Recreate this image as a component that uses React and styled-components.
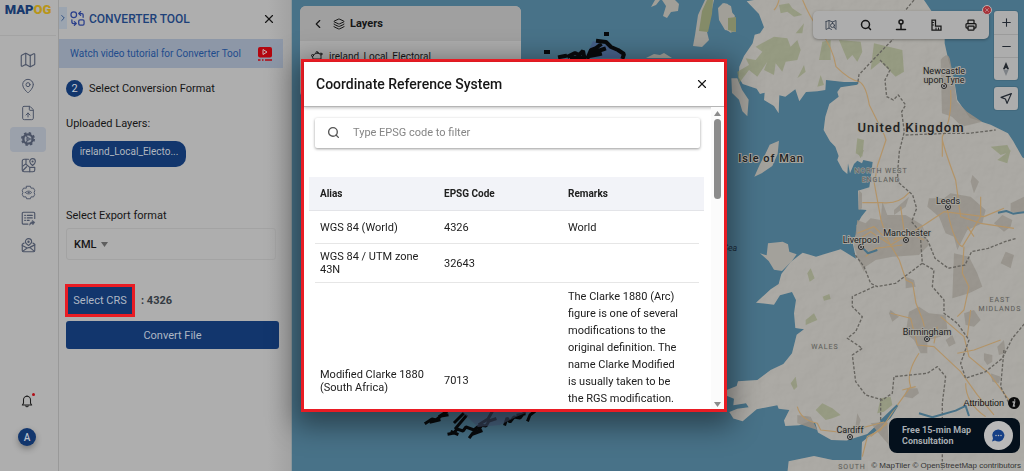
import React from 'react'
import styled, { createGlobalStyle, css } from 'styled-components'
import { ChevronLeft, ChevronRight, FileUp, Layers, Map, MapPin, Minus, Plus, Printer, Search, X } from 'lucide-react'

const GlobalStyle = createGlobalStyle`
  * {
    box-sizing: border-box;
  }
  body {
    margin: 0;
    font-family: Roboto, "Liberation Sans", sans-serif;
    font-size: 11px;
    color: #161616;
    background: #aeaeae;
  }
  button, input, select {
    font: inherit;
    color: inherit;
  }
  button {
    display: flex;
    align-items: center;
    justify-content: center;
    padding: 0;
    border: none;
    background: none;
    cursor: pointer;
  }
  svg {
    display: block;
    flex-shrink: 0;
  }
`

const Page = styled.div`
  display: flex;
  height: 100vh;
  overflow: hidden;
`

/* side rail */

const Rail = styled.nav`
  width: 59px;
  flex-shrink: 0;
  display: flex;
  flex-direction: column;
  align-items: center;
  border-right: 1px solid #999;
  padding: 0 2px 25px 0;
`

const Logo = styled.a`
  width: 100%;
  height: 36px;
  flex-shrink: 0;
  text-align: center;
  border-bottom: 1px solid #a3a3a3;
  font-size: 13px;
  font-weight: 900;
  line-height: 20px;
  color: #17396d;
  text-decoration: none;

  span {
    color: #b8951a;
  }
`

const RailList = styled.div`
  height: 211px;
  flex-shrink: 0;
  margin-top: 11px;
  display: flex;
  flex-direction: column;
  justify-content: space-between;
`

const RailButton = styled.button`
  width: 36px;
  height: 25px;
  border-radius: 4px;
  color: #4b5366;
  background: ${({ $active }) => ($active ? '#9ba1ab' : 'none')};
`

const Bell = styled.button`
  position: relative;
  margin: auto 2px 0 0;
  color: #1d1d1d;

  &::after {
    content: '';
    position: absolute;
    top: -1px;
    right: -1px;
    width: 3px;
    height: 3px;
    border-radius: 50%;
    background: #b00d16;
  }
`

const Avatar = styled.button`
  width: 18px;
  height: 18px;
  margin: 20px 2px 0 0;
  border-radius: 50%;
  background: #12366d;
  color: #b8bfca;
  font-size: 10px;
  font-weight: 500;
  box-shadow: 0 3px 6px rgba(0, 0, 0, 0.3);
`

/* converter panel */

const Panel = styled.section`
  position: relative;
  width: 232px;
  flex-shrink: 0;
  background: linear-gradient(to right, #aeaeae 90%, #a2a2a2);
`

const PanelHead = styled.header`
  display: flex;
  align-items: center;
  height: 39px;
  padding: 0 15px 2px 0;

  h1 {
    flex: 1;
    margin: 0 0 0 4px;
    font-size: 12px;
    font-weight: 500;
    color: #1d4179;
  }
`

const Collapse = styled.button`
  width: 8px;
  height: 22px;
  margin: 0 3px 2px 0;
  background: #9ca5b0;
  color: #1d4179;
`

const Tutorial = styled.a`
  display: flex;
  align-items: center;
  justify-content: space-between;
  height: 29px;
  margin-right: 8px;
  padding: 0 11px;
  background: #8d97a7;
  color: #1f4c8c;
  font-size: 10px;
  text-decoration: none;
`

const PanelBody = styled.div`
  display: flex;
  flex-direction: column;
  padding: 12px 12px 0 7px;
`

const Step = styled.h2`
  display: flex;
  align-items: center;
  gap: 6px;
  margin: 0;
  font-size: 11px;
  font-weight: 400;

  span {
    width: 17px;
    height: 17px;
    border-radius: 50%;
    background: #12366d;
    color: #c3c8d0;
    line-height: 17px;
    text-align: center;
  }
`

const FieldLabel = styled.label`
  line-height: 16px;
  margin-top: ${({ $gap }) => $gap}px;
`

const Chip = styled.button`
  align-self: flex-start;
  width: 114px;
  height: 26px;
  margin: 9px 0 0 6px;
  padding-bottom: 5px;
  border-radius: 10px;
  background: #12366d;
  color: #b0b6bf;
  font-size: 10px;
`

const SelectBox = styled.div`
  display: flex;
  align-items: center;
  gap: 4px;
  height: 32px;
  margin: 4px 3px 0 0;
  padding-left: 7px;
  border: 1px solid #a3a3a3;
  border-radius: 3px;

  select {
    appearance: none;
    border: none;
    background: none;
    padding: 0;
    outline: none;
    font-weight: 500;
  }
`

const CrsRow = styled.div`
  display: flex;
  align-items: center;
  gap: 6px;
  margin: 24px 0 4px -1px;
  font-weight: 700;
  color: #333a42;
`

const ActionButton = styled.button`
  height: 28px;
  border-radius: 3px;
  background: #12366d;
  color: #aeb7c4;
  font-weight: 400;
  ${({ $marked }) =>
    $marked &&
    css`
      width: 70px;
      height: 33px;
      border: 3px solid #e91c24;
      border-radius: 0;
    `}
`

/* map */

const MapArea = styled.main`
  position: relative;
  flex: 1;
  min-width: 0;
  overflow: hidden;
  background: #487288;
  border-left: 1px solid #8c979b;
`

const MapDrawing = styled.svg`
  width: 100%;
  height: 100%;

  text {
    font-family: Roboto, sans-serif;
    text-anchor: middle;
    paint-order: stroke;
    stroke: #a6a49d;
    stroke-width: 2px;
    fill: #222;
  }
  .region {
    fill: #5c5c5a;
    font-size: 7px;
    letter-spacing: 1px;
    stroke-width: 1px;
  }
`

const LayerCard = styled.section`
  position: absolute;
  top: 6px;
  left: 8px;
  width: 221px;
  height: 92px;
  border-radius: 6px;
  overflow: hidden;
  background: #acacac;

  header {
    display: flex;
    align-items: center;
    gap: 8px;
    height: 35px;
    padding-left: 11px;
    background: #a0a0a0;
  }
  h2 {
    display: flex;
    align-items: center;
    gap: 5px;
    margin: 0;
    font-size: 11px;
    font-weight: 700;
  }
  p {
    display: flex;
    align-items: center;
    gap: 6px;
    margin: 9px 11px;
    font-size: 10px;
  }
`

const Tools = styled.div`
  position: absolute;
  top: 11px;
  right: 6px;
  display: flex;
  align-items: flex-start;
  gap: 5px;
`

const ToolBar = styled.div`
  position: relative;
  display: flex;
  width: 176px;
  height: 28px;
  border-radius: 5px;
  background: #adadad;
  box-shadow: 0 1px 3px rgba(0, 0, 0, 0.3);

  > button {
    flex: 1;
  }
`

const CloseBadge = styled.span`
  position: absolute;
  top: -6px;
  right: -3px;
  padding: 1px;
  border: 1px solid #b4b4b4;
  border-radius: 50%;
  background: #a73239;
  color: #ccc;
`

const ZoomColumn = styled.div`
  display: flex;
  flex-direction: column;
  gap: 7px;
`

const ZoomGroup = styled.div`
  width: 24px;
  border-radius: 3px;
  background: #adadad;
  box-shadow: 0 0 0 1px rgba(0, 0, 0, 0.08);

  button {
    width: 100%;
    height: 23px;
    color: #222831;
  }
  button + button {
    border-top: 1px solid #9b9b9b;
  }
`

const MapFooter = styled.div`
  position: absolute;
  right: 0;
  bottom: 0;
  display: flex;
  flex-direction: column;
  align-items: flex-end;
`

const Attribution = styled.div`
  display: flex;
  align-items: center;
  gap: 4px;
  margin-right: 4px;
  font: 9px/12px "Liberation Sans", sans-serif;
  color: #111;
`

const Consult = styled.button`
  gap: 10px;
  height: 35px;
  margin: 9px 4px 8px 0;
  padding: 0 7px 0 13px;
  border-radius: 8px;
  background: #04101c;
  color: #a8adb2;
  font-size: 9px;
  font-weight: 700;
  line-height: 11px;
  text-align: left;

  span {
    width: 72px;
  }
`

const Copyright = styled.div`
  padding: 0 3px;
  background: rgba(175, 175, 172, 0.5);
  font: 8px/10px "Liberation Sans", sans-serif;
  color: #333;
`

/* dialog */

const Overlay = styled.div`
  position: fixed;
  inset: 0;
  display: flex;
  align-items: center;
  justify-content: center;
  padding-left: 4px;
`

const Dialog = styled.div`
  display: flex;
  flex-direction: column;
  width: 426px;
  max-width: 90%;
  height: 75vh;
  border: 3px solid #e91c24;
  background: #fff;
  box-shadow: 0 8px 26px 6px rgba(0, 0, 0, 0.42);
`

const DialogHead = styled.header`
  display: flex;
  align-items: center;
  justify-content: space-between;
  height: 45px;
  flex-shrink: 0;
  padding: 0 15px 0 12px;
  border-bottom: 1px solid #b5b5b5;
  box-shadow: 0 1px 3px rgba(0, 0, 0, 0.25);

  h2 {
    margin: 0;
    font-size: 14px;
    font-weight: 500;
  }
`

const DialogBody = styled.div`
  flex: 1;
  min-height: 0;
  display: flex;
`

const Scroller = styled.div`
  flex: 1;
  min-width: 0;
  overflow: hidden;
  padding: 11px 7px 0 5px;
`

const SearchField = styled.label`
  display: flex;
  align-items: center;
  gap: 13px;
  height: 30px;
  margin: 0 4px 29px 6px;
  padding-left: 12px;
  border-radius: 2px;
  color: #555;
  box-shadow: 0 1px 3px rgba(0, 0, 0, 0.4);

  input {
    flex: 1;
    min-width: 0;
    border: none;
    outline: none;
    padding: 0;
    background: none;
  }
  input::placeholder {
    color: #858585;
  }
`

const Table = styled.table`
  width: 100%;
  table-layout: fixed;
  border-collapse: collapse;
  color: #202020;

  th {
    height: 34px;
    padding: 0 0 0 11px;
    text-align: left;
    font-size: 10px;
    font-weight: 700;
    background: #f2f3f8;
    border-bottom: 1px solid #e3e4e8;
  }
  th:nth-child(-n + 2) {
    width: 124px;
  }
`

const Cell = styled.td`
  height: ${({ $height }) => $height}px;
  padding: 5px ${({ $edge }) => ($edge === 'right' ? 22 : 4)}px 5px 11px;
  font-size: 11px;
  line-height: ${({ $loose }) => ($loose ? 17 : 13)}px;
  vertical-align: ${({ $loose }) => ($loose ? 'top' : 'middle')};
  background: linear-gradient(#e6e6e6, #e6e6e6) ${({ $edge }) => ($edge === 'left' ? '6px' : $edge === 'right' ? '-5px' : '0')} 100% / 100% 1px no-repeat;
`

const ScrollTrack = styled.div`
  width: 13px;
  display: flex;
  flex-direction: column;
  align-items: center;
  padding: 4px 0 2px;
  background: #fbfbfb;

  i {
    width: 7px;
    height: 80px;
    margin-top: 3px;
    border-radius: 4px;
    background: #8b8b8b;
  }
  svg:last-child {
    margin-top: auto;
  }
`

const Icon = ({ size = 15, children, ...rest }) => (
  <svg width={size} height={size} viewBox="0 0 24 24" fill="none" stroke="currentColor" strokeWidth="1.8" strokeLinecap="round" strokeLinejoin="round" {...rest}>
    {children}
  </svg>
)

const GearIcon = () => (
  <Icon size={14}>
    <circle cx="12" cy="12" r="8" strokeWidth="4" />
    <circle cx="12" cy="12" r="10.500" strokeWidth="3" strokeDasharray="4.200 4.046" strokeLinecap="butt" />
    <circle cx="12" cy="12" r="2" />
    <path d="M14 12h4M11 10l-2-4M11 14l-2 4" />
  </Icon>
)

const MapSplitIcon = () => (
  <Icon>
    <path d="M12 2H5a3 3 0 0 0-3 3v14a3 3 0 0 0 3 3h14a3 3 0 0 0 3-3v-3" />
    <path d="M8 2v7l-5 4M8 10l6 5v7M3 20l6-6M15 15h7" />
    <path d="M18.500 12c-3-2.500-4.500-4-4.500-6.500a4.500 4.500 0 0 1 9 0c0 2.500-1.500 4-4.500 6.500z" />
    <circle cx="18.500" cy="5.500" r=".8" />
  </Icon>
)

const EyeGearIcon = () => (
  <Icon strokeWidth="1.500">
    <path d="M9 2h6l1 3 4 0 2 4-1 3 1 3-2 4-4 0-1 3H9l-1-3-4 0-2-4 1-3-1-3 2-4 4 0z" />
    <path d="M7 12c2.500-3 7.500-3 10 0-2.500 3-7.500 3-10 0z" />
    <circle cx="12" cy="12" r=".8" />
  </Icon>
)

const ListEditIcon = () => (
  <Icon>
    <path d="M11 21H4a2 2 0 0 1-2-2V4a2 2 0 0 1 2-2h16a2 2 0 0 1 2 2v8" />
    <path d="M6 7h1M10 7h8M6 11h1M10 11h8M6 15h1M10 15h3" />
    <path d="M14 22c0-4 3-5 5-5l-1-2 4 3-3 4-1-2c-2 0-3 1-4 2z" fill="currentColor" strokeWidth="1" />
  </Icon>
)

const MapMailIcon = () => (
  <Icon>
    <path d="M5 8l-3 2v10a2 2 0 0 0 2 2h16a2 2 0 0 0 2-2V10l-3-2" />
    <path d="M2 12l8 4 4-1 8-4M10 16l-7 5M14 15l7 6" />
    <path d="M12 12C8 9 7 8 7 6a5 5 0 0 1 10 0c0 2-1 3-5 6z" />
    <circle cx="12" cy="6" r="1" />
  </Icon>
)

const BellIcon = () => (
  <Icon size={14}>
    <path d="M4 19h16l-2-3V10a6 6 0 0 0-12 0v6z" />
    <path d="M10 20a2 2 0 0 0 4 0M12 4V3" />
  </Icon>
)

const ConvertIcon = () => (
  <Icon size={15} stroke="#2a3f8c" strokeWidth="2">
    <circle cx="6" cy="6" r="4.500" />
    <rect x="14" y="14" width="8.500" height="8.500" rx="2" />
    <path d="M15 4h4a2 2 0 0 1 2 2v4M17 1l-3 3 3 3" />
    <path d="M3 14v3a3 3 0 0 0 3 3h4M7 17l3 3-3 3" />
  </Icon>
)

const VideoIcon = () => (
  <svg width="14" height="14" viewBox="0 0 28 28">
    <rect width="28" height="21" rx="4" fill="#b3060f" />
    <path d="M10 5l8 5-8 5z" fill="none" stroke="#c9b7b7" strokeWidth="2" />
    <path d="M0 26h5M8 26h3M14 26h14" stroke="#b3060f" strokeWidth="3" />
  </svg>
)

const MapSearchIcon = () => (
  <Icon size={12} stroke="#3a4350">
    <path d="M2 5l6-2 7 3 7-3v16M2 5v16l6-3 5 3M8 3v15M15 6v3" />
    <circle cx="15" cy="13" r="4" />
    <path d="M18 16l4 5" />
  </Icon>
)

const StationIcon = () => (
  <Icon size={12} strokeWidth="3">
    <circle cx="12" cy="6" r="4" />
    <path d="M12 10v10M3 21h18" />
  </Icon>
)

const RulerIcon = () => (
  <Icon size={12} strokeWidth="2.500" strokeLinejoin="miter">
    <path d="M4 2h7v12h11v8H4z" />
    <path d="M5 7h2M5 12h2M12 21v-3M17 21v-3" strokeWidth="2" />
  </Icon>
)

const CompassIcon = () => (
  <svg width="8" height="14" viewBox="0 0 8 14">
    <path d="M4 0l3 7H1z" fill="#24292f" />
    <path d="M1 7h6l-3 7z" fill="#7d8186" />
    <circle cx="4" cy="7" r="1" fill="#adadad" />
  </svg>
)

const LocateIcon = () => (
  <Icon size={13} strokeWidth="2.200">
    <path d="M21 3L2 10l8 3 3 8z" />
  </Icon>
)

const PolygonIcon = () => (
  <Icon size={12}>
    <path d="M3 11l8-5 9 2v10H5z" />
    <circle cx="3" cy="11" r="2" fill="#acacac" />
    <circle cx="12" cy="5" r="2" fill="#acacac" />
    <circle cx="20" cy="8" r="2" fill="#acacac" />
  </Icon>
)

const ChatIcon = () => (
  <svg width="29" height="29" viewBox="0 0 29 29">
    <circle cx="14.500" cy="14.500" r="14.500" fill="#b9b9b9" />
    <path d="M14.500 8.500a6 6 0 1 1-3.500 11l-3 1 1-3a6 6 0 0 1 5.500-9z" fill="#153f85" />
    <path d="M12 14.500h0M14.500 14.500h0M17 14.500h0" stroke="#b9b9b9" strokeWidth="1.500" strokeLinecap="round" />
  </svg>
)

const InfoIcon = () => (
  <svg width="12" height="12" viewBox="0 0 12 12">
    <circle cx="6" cy="6" r="6" fill="#0b0b0b" />
    <path d="M5 5h1.500l-1 4h1M6.700 3h0" fill="none" stroke="#aaa" strokeWidth="1.500" strokeLinecap="round" />
  </svg>
)

const Arrow = ({ up, color = '#8b8b8b' }) => (
  <svg width="7" height="5" viewBox="0 0 7 5">
    <path d={up ? 'M0 5h7L3.500 0z' : 'M0 0h7L3.500 5z'} fill={color} />
  </svg>
)

const LAND =
  'M90 0L68 4 105 42 120 82 108 100 92 104 86 130 60 168 46 200 44 232 56 252 98 266 108 282 122 278 120 300 150 318 164 340 166 286 184 290 214 268 226 304 246 276 280 274 304 270 306 240 360 246 404 246 400 254 350 262 340 276 344 290 316 312 304 350 299 390 318 424 334 440 344 468 340 480 356 510 370 522 372 490 378 520 390 492 400 482 414 490 418 480 446 486 442 520 436 562 402 572 404 628 428 630 412 650 398 676 398 700 386 728 396 776 350 748 276 770 236 758 200 786 172 822 164 852 140 868 96 908 150 914 168 886 204 876 216 900 210 940 214 984 240 988 218 1004 204 1060 178 1092 140 1110 100 1140 42 1144 38 1158 8 1170 4 1186 30 1196 28 1216 66 1210 74 1222 40 1226 16 1236 28 1256 56 1264 98 1228 160 1216 164 1226 196 1230 180 1262 184 1278 226 1276 256 1264 274 1270 282 1298 322 1320 368 1322 430 1302 470 1264 524 1216 500 1254 460 1290 414 1326 412 1380 326 1380 270 1368 194 1384 190 1420H910V480L895 472 868 424 852 400 800 374 738 354 700 300 690 236 674 184 662 130 662 98 630 44 600 0z'

const FORESTS = [
  'M150 110l40 5 10 25 20-20 10 30-10 30-35 5-10 30-20-25-5 35-30-15 10-25-30 45-25-20-30 40-5-35 35-20-10-20 30 5 20-25-20-15z',
  'M165 15l30-5 10 15 30 20-25 5-20-15-20 5zM215 100l25-30-5 30zM285 180l10-55 25-5 0 60zM220 235l20-40 5 20zM280 260l10-35 10 30z',
  'M345 120l65 5 5 30-15 30-15-20-15 15zM450 130l85 20 5 65-25 15-45-45-30 25z M395 460l5-45 20 5-5 50z',
  'M250 820l10-15 12 30-15 10zM296 890l20-8 4 15-20 5zM245 960l25-20 10 20-35 15z M200 1150l15-20 5 30-10 10zM275 1230l20-20 30 15 25 20-25 10-20 5zM460 1240l10-45 30-5 5 25-25 20z',
  'M800 440l50-5 10 20-30 10zM820 480l40-30-10 40z M400 455l20-5-10 25z',
]

const TOWNS = [
  'M650 180q20-25 27-5l12 60 10 70 30 30 45 30-60 15-30-30-30-10z',
  'M610 620l5-25 45 0 20-15 60 10 45 40-10 40-45 20-30 60-10-40-25-10-20-50zM690 760l45 10 25 50 15 40-40 20-50 15z',
  'M400 660l25 10 15-15 30 5 5-55 15 40 55 0 50 30 20 60-30 30-80 5-50 10-30 20-5 15-15-30-15-45zM510 630l45-40-10 30-35 25z M404 570l10 10 0 45-10 5z',
  'M740 545l5-20 20 20-15 35zM830 790l15-35 25 10-10 40zM545 830l25 10 5 20-30 5zM810 670l25-25 30 15-5 20-20 15zM860 610l40-20 0 50-40-5z',
  'M555 935l30-15 30 20 50 5 5 40-20 25-40 10 0 40-20 0-20-40-25-20zM720 940l30-10 20 30-20 20-25-5zM665 1020l20-15 10 25-20 10zM780 1080l0-20 25 5 0 20-15 10z',
  'M540 1190l10-25 30 0 5 15-20 15zM820 1040l20-20 5 40-20 5zM495 940l5-10 25 20-20 15zM400 1240l10 20-5 20-10-5z M220 1245l40 5 20 40-60-20zM440 1270l50-5 5 70-35-40zM800 1120l30 10-5 20-20-5z',
]

const ROADS = [
  'M236 0q20 50 50 90 40 50 50 110 40 40 70 45 20 10 30 70 20 40 45 90l5 15-25 75-10 55 20 110 20 60 35 60 20 60 20 10 10 60 20 50 5 20',
  'M165 0q-5 20-15 30M400 720l40-25 60 40 100-60 60-40 120 15 60-25M425 770l30-25 80-10M415 608h60q50 5 80-30M400 700l50-20 40 40',
  'M655 470l0-60q30-50 25-140M655 420q10 40 40 120l15 110 60 20 100 15M670 630q20 100 45 110l55-90 0-60M720 740l-5 80 20 40-15 70-20 20',
  'M500 940l60 15 20 80 50 5 80 75 50 70 50 60M585 1060q-40 60-25 100l-50 70-40 60-40 20-15 60M640 980l-10 50M650 950l70 60 15 60 60 50 60 80M535 1170l40-10',
  'M220 1220q10 40 60 50l10 20 70 8 120-32M490 1270l-50 40M725 1150q0 60 60 100M700 1060l50-10 80-30M740 930l-10 80M530 620l10 70-30 30 50-20 40 20M730 680l20 30',
]

const BORDERS = [
  'M570 0l-25 30-40 90-20 20-80 84-4 28M468 180l30 30-15 30 5 50 20 10 15-15 22 30-12 20 8 60-15 60-5 60 0 30 45 40 12 40-15 40 50 60 20 50 40 30 50-10 20-40 50-10 50-20 35-10',
  'M545 405l130-5 60 0 80-10M590 720l5 70-80 60-55 10-20-10-20-50-30-40M595 790l35 20-5 50 35 40 0 40 40 30 35 50-25 70 15 45 60-20 50-40 30-60 50-60',
  'M450 860l-65 30 0 30 30 30-20 45-25 20 45 30-30 20 10 80 30 40 50 15 30-20 5-50 100-10 30-20 25 30-10 80 0 200M470 1195v70M840 1050l-10 110 30 60',
]

const CITIES = [
  [944, 86], [948, 207], [906, 240], [861, 247], [927, 339], [850, 437],
]

const MapView = () => (
  <MapDrawing viewBox="291 0 733 471" preserveAspectRatio="xMaxYMin slice" role="img" aria-label="Map">
    <defs>
      <filter id="relief" x="0" y="0" width="100%" height="100%">
        <feTurbulence type="fractalNoise" baseFrequency="0.07" numOctaves="3" seed="8" />
        <feDiffuseLighting surfaceScale="2" lightingColor="#fff">
          <feDistantLight azimuth="225" elevation="62" />
        </feDiffuseLighting>
      </filter>
      <clipPath id="land">
        <path d={LAND} transform="translate(724 0) scale(.3333)" />
      </clipPath>
    </defs>
    <g transform="translate(724 0) scale(.3333)" strokeLinejoin="round">
      <g fill="#a3a19b">
        <path d={LAND} />
        <path d="M22 235h18l14 34 20 30-4 50-15-15-10-35-21-20zM165 422l-4 40-16 36-32 22-22 10 16-36 16-30 14-30z" />
        <path d="M108 760l20 6 4-36 44-5 16 8 4 22 22 8-14 20-30 30-24-4-16-26z" />
        <path d="M0 10q22 0 22 26l10 10 4 44-16 8-20-14z" />
      </g>
      <g fill="#848b68" opacity="0.75">
        {FORESTS.map((d) => <path key={d} d={d} />)}
        <path d="M8 50l15 10 10 30-10 8-15-20z" />
      </g>
      <g fill="#8f8b83">{TOWNS.map((d) => <path key={d} d={d} />)}</g>
    </g>
    <g clipPath="url(#land)">
      <rect x="724" width="300" height="471" filter="url(#relief)" opacity="0.1" />
    </g>
    <g transform="translate(724 0) scale(.3333)" fill="none" strokeLinejoin="round">
      <g stroke="#b39468" strokeWidth="3.500">{ROADS.map((d) => <path key={d} d={d} />)}</g>
      <g stroke="#66645f" strokeWidth="4" strokeDasharray="9 5">{BORDERS.map((d) => <path key={d} d={d} />)}</g>
      <path d="M822 638l25-5 20 8 40-5M418 746l14 14 28-10M585 1240l40 12 70-20 30-14 10 30M470 1264l50-48" stroke="#487288" strokeWidth="6" />
    </g>
    {/* islands above the dialog */}
    <g fill="#a19f98">
      <path d="M655 0l-4 7 5-2 4-5zM662 0l4 6-3 10 4 2 4-6 7-1 1-7-5-5zM705 0l-7 15-3 20-2 11 9 1 7-7-2-8 3-14 4-18zM718 8l5-5 8 3 5 26-11-2-6-10zM646 58l8-4 6 1 4-2 8 5z" />
      <path d="M713 0l-1 14-4 18-9-1 3-20 5-11zM736 32l-8-2 0-12 8-1z" fill="#848b68" />
    </g>
    {/* uploaded layer */}
    <path d="M585 58l8-17 14 4 20 13z" fill="#46618a" />
    <g fill="none" stroke="#080a0c" strokeWidth="3" strokeLinejoin="bevel" strokeLinecap="square">
      <path d="M598 41l8 1 5 5 7 3 6 4-1 3M588 57l3-7 5-2 4-3M592 54l6-3 6-2M590 56l10-2M560 57l5-1M569 56l6-3 4 2 4-4 1 5M572 58h12" strokeWidth="4" />
      <path d="M426 423l6-4 4 1 5-4 6-1M431 422l8-2M440 416l6-4M449 434l5-1 3-4 6 2 3-4 8 3 6-5 6 1 3-5 6-2M452 432l5 2M470 437l3-4 5-2 4-6M473 434l8-3M455 422l8-8M456 428l10-12M480 424l8-5 4-7M505 424l2-6 3 4 4-5 6 1 4-5M518 415l6-1M528 420l2-5 4-3" />
    </g>
    <path d="M544 50h6v4h-6zM604 32h5v4h-5z" fill="#080a0c" />
    <path d="M462 412h66l-12 5-16 8-22 2z" fill="#4a5a7c" opacity=".6" />
    <g fill="#aaa" stroke="#222">
      {CITIES.map(([x, y]) => (
        <g key={x}>
          <circle cx={x} cy={y} r="2.500" />
          <circle cx={x} cy={y} r=".6" />
        </g>
      ))}
    </g>
    <text x="911" y="132" fontSize="13" fontWeight="500" letterSpacing="1">United Kingdom</text>
    <text x="771" y="162" fontSize="11" fontWeight="500" letterSpacing="1">Isle of Man</text>
    <text x="944" y="74" fontSize="9">Newcastle</text>
    <text x="944" y="83" fontSize="9">upon Tyne</text>
    <text x="948" y="204" fontSize="9">Leeds</text>
    <text x="907" y="236" fontSize="9">Manchester</text>
    <text x="861" y="243" fontSize="9">Liverpool</text>
    <text x="927" y="335" fontSize="9">Birmingham</text>
    <text x="850" y="433" fontSize="9">Cardiff</text>
    <text x="730" y="251" fontSize="9" fontStyle="italic" style={{ fill: '#1c2c3c', stroke: 'none' }}>Sea</text>
    <text x="881" y="173" className="region">NORTH WEST</text>
    <text x="881" y="182" className="region">ENGLAND</text>
    <text x="1000" y="302" className="region">EAST</text>
    <text x="1000" y="311" className="region">MIDLANDS</text>
    <text x="825" y="349" className="region">WALES</text>
    <text x="852" y="469" className="region">SOUTH</text>
  </MapDrawing>
)

const railItems = [
  ['Maps', <Map size={18} strokeWidth={1.5} />],
  ['Places', <MapPin size={16} strokeWidth={1.5} />],
  ['Upload', <FileUp size={16} strokeWidth={1.5} />],
  ['Converter', <GearIcon />],
  ['Map layout', <MapSplitIcon />],
  ['View settings', <EyeGearIcon />],
  ['Edit list', <ListEditIcon />],
  ['Share map', <MapMailIcon />],
]

const rows = [
  { alias: 'WGS 84 (World)', code: '4326', remarks: 'World', height: 33 },
  { alias: 'WGS 84 / UTM zone 43N', code: '32643', remarks: '', height: 39 },
  {
    alias: 'Modified Clarke 1880 (South Africa)',
    code: '7013',
    remarks:
      'The Clarke 1880 (Arc) figure is one of several modifications to the original definition. The name Clarke Modified is usually taken to be the RGS modification.',
    height: 196,
    long: true,
  },
]

const CrsDialog = () => (
  <Overlay>
    <Dialog role="dialog" aria-labelledby="crs-title">
      <DialogHead>
        <h2 id="crs-title">Coordinate Reference System</h2>
        <button aria-label="Close dialog"><X size={14} /></button>
      </DialogHead>
      <DialogBody>
        <Scroller>
          <SearchField>
            <Search size={13} strokeWidth={2.5} />
            <input type="text" placeholder="Type EPSG code to filter" aria-label="Type EPSG code to filter" />
          </SearchField>
          <Table>
            <thead>
              <tr>
                <th>Alias</th>
                <th>EPSG Code</th>
                <th>Remarks</th>
              </tr>
            </thead>
            <tbody>
              {rows.map((row) => (
                <tr key={row.code}>
                  <Cell $height={row.height} $edge="left">{row.alias}</Cell>
                  <Cell>{row.code}</Cell>
                  <Cell $edge="right" $loose={row.long}>{row.remarks}</Cell>
                </tr>
              ))}
            </tbody>
          </Table>
        </Scroller>
        <ScrollTrack aria-hidden="true">
          <Arrow up />
          <i />
          <Arrow />
        </ScrollTrack>
      </DialogBody>
    </Dialog>
  </Overlay>
)

const App = () => {
  return (
    <Page>
      <GlobalStyle />
      <Rail>
        <Logo href="#">MAP<span>OG</span></Logo>
        <RailList>
          {railItems.map(([name, icon]) => (
            <RailButton key={name} aria-label={name} $active={name === 'Converter'}>{icon}</RailButton>
          ))}
        </RailList>
        <Bell aria-label="Notifications"><BellIcon /></Bell>
        <Avatar>A</Avatar>
      </Rail>
      <Panel>
        <PanelHead>
          <Collapse aria-label="Collapse"><ChevronRight size={10} /></Collapse>
          <ConvertIcon />
          <h1>CONVERTER TOOL</h1>
          <button aria-label="Close panel"><X size={14} /></button>
        </PanelHead>
        <Tutorial href="#">
          Watch video tutorial for Converter Tool
          <VideoIcon />
        </Tutorial>
        <PanelBody>
          <Step><span>2</span>Select Conversion Format</Step>
          <FieldLabel as="div" $gap={19}>Uploaded Layers:</FieldLabel>
          <Chip>ireland_Local_Electo...</Chip>
          <FieldLabel htmlFor="format" $gap={41}>Select Export format</FieldLabel>
          <SelectBox>
            <select id="format" defaultValue="KML">
              <option>KML</option>
            </select>
            <Arrow color="#5e5e5e" />
          </SelectBox>
          <CrsRow>
            <ActionButton $marked>Select CRS</ActionButton>
            : 4326
          </CrsRow>
          <ActionButton>Convert File</ActionButton>
        </PanelBody>
      </Panel>
      <MapArea>
        <MapView />
        <LayerCard>
          <header>
            <button aria-label="Back"><ChevronLeft size={14} /></button>
            <h2><Layers size={12} />Layers</h2>
          </header>
          <p><PolygonIcon />ireland_Local_Electoral</p>
        </LayerCard>
        <Tools>
          <ToolBar>
            <button aria-label="Search map"><MapSearchIcon /></button>
            <button aria-label="Search"><Search size={12} strokeWidth={3} /></button>
            <button aria-label="Station"><StationIcon /></button>
            <button aria-label="Measure"><RulerIcon /></button>
            <button aria-label="Print"><Printer size={12} strokeWidth={2.5} /></button>
            <CloseBadge><X size={6} /></CloseBadge>
          </ToolBar>
          <ZoomColumn>
            <ZoomGroup>
              <button aria-label="Zoom in"><Plus size={13} /></button>
              <button aria-label="Zoom out"><Minus size={13} /></button>
              <button aria-label="Reset north"><CompassIcon /></button>
            </ZoomGroup>
            <ZoomGroup>
              <button aria-label="Locate"><LocateIcon /></button>
            </ZoomGroup>
          </ZoomColumn>
        </Tools>
        <MapFooter>
          <Attribution>Attribution<InfoIcon /></Attribution>
          <Consult><span>Free 15-min Map Consultation</span><ChatIcon /></Consult>
          <Copyright>© MapTiler © OpenStreetMap contributors</Copyright>
        </MapFooter>
      </MapArea>
      <CrsDialog />
    </Page>
  )
}

export default App
